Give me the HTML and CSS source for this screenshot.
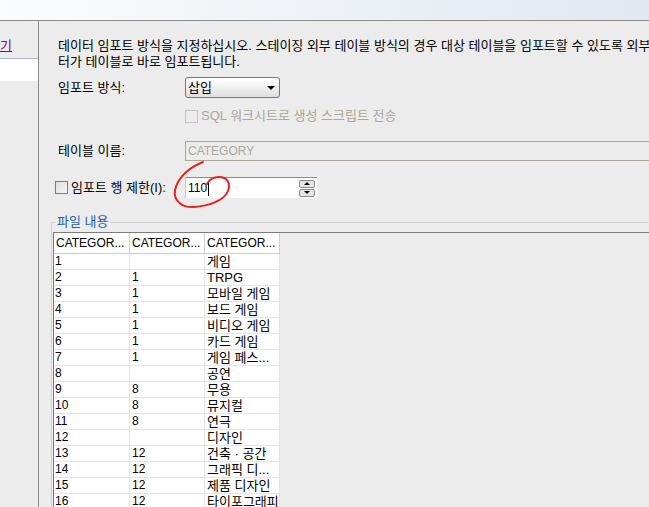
FILE: index.html
```html
<!DOCTYPE html>
<html lang="ko">
<head>
<meta charset="utf-8">
<link rel="stylesheet" href="styles.css">
</head>
<body>
<div class="top"></div>
<div class="main">
  <aside class="side">
    <div class="side-link"><a href="#" class="link">기</a></div>
    <div class="side-field"></div>
  </aside>
  <section class="content">
    <p class="desc">데이터 임포트 방식을 지정하십시오. 스테이징 외부 테이블 방식의 경우 대상 테이블을 임포트할 수 있도록 외부<br>터가 테이블로 바로 임포트됩니다.</p>
    <div class="form">
      <div class="row row-method">
        <span class="label">임포트 방식:</span>
        <div class="select"><span>삽입</span><span class="arrow"></span></div>
      </div>
      <div class="row row-sql">
        <span></span>
        <label class="check disabled"><span class="box"></span>SQL 워크시트로 생성 스크립트 전송</label>
      </div>
      <div class="row row-name">
        <span class="label">테이블 이름:</span>
        <div class="field disabled-field">CATEGORY</div>
      </div>
      <div class="row row-limit">
        <label class="check"><span class="box box-on"></span>임포트 행 제한(I):</label>
        <div class="spin"><span class="spin-text">110<span class="caret"></span></span><span class="spin-btns"><span class="sb sb-up"></span><span class="sb sb-down"></span></span></div>
      </div>
    </div>
    <fieldset class="group">
      <legend>파일 내용</legend>
      <div class="grid">
        <table>
          <colgroup><col class="c1"><col class="c"><col class="c"></colgroup>
          <thead>
            <tr><th>CATEGOR...</th><th>CATEGOR...</th><th>CATEGOR...</th></tr>
          </thead>
          <tbody>
            <tr><td>1</td><td></td><td>게임</td></tr>
            <tr><td>2</td><td>1</td><td>TRPG</td></tr>
            <tr><td>3</td><td>1</td><td>모바일 게임</td></tr>
            <tr><td>4</td><td>1</td><td>보드 게임</td></tr>
            <tr><td>5</td><td>1</td><td>비디오 게임</td></tr>
            <tr><td>6</td><td>1</td><td>카드 게임</td></tr>
            <tr><td>7</td><td>1</td><td>게임 페스...</td></tr>
            <tr><td>8</td><td></td><td>공연</td></tr>
            <tr><td>9</td><td>8</td><td>무용</td></tr>
            <tr><td>10</td><td>8</td><td>뮤지컬</td></tr>
            <tr><td>11</td><td>8</td><td>연극</td></tr>
            <tr><td>12</td><td></td><td>디자인</td></tr>
            <tr><td>13</td><td>12</td><td>건축 · 공간</td></tr>
            <tr><td>14</td><td>12</td><td>그래픽 디...</td></tr>
            <tr><td>15</td><td>12</td><td>제품 디자인</td></tr>
            <tr><td>16</td><td>12</td><td>타이포그래피</td></tr>
          </tbody>
        </table>
      </div>
    </fieldset>
  </section>
</div>
<svg class="mark" width="649" height="507" viewBox="0 0 649 507">
  <path d="M203,162 C190,167 178,177 175,190 C173,201 183,208 194,207 C208,206 224,201 228,191 C231,183 227,177 219,177 C213,177 209,180 207,184" fill="none" stroke="#e3231d" stroke-width="2" stroke-linecap="round"/>
</svg>
</body>
</html>
```
FILE: styles.css
```css
html, body {
  margin: 0;
  padding: 0;
  overflow: hidden;
}
body {
  width: 649px;
  height: 507px;
  background: #ececec;
  color: #000;
  font: 13px/16px "Liberation Sans", "Noto Sans CJK KR", sans-serif;
  position: relative;
}
.top {
  height: 20px;
  background: linear-gradient(90deg, #fbfcfd 0%, #eef2f6 50%, #e1e8ef 100%);
  border-bottom: 1px solid #8a8a8a;
}
.main {
  display: flex;
  height: 486px;
}
.side {
  flex: none;
  width: 38px;
  border-right: 1px solid #8a8a8a;
}
.side-link {
  height: 37px;
  padding-top: 17px;
  box-sizing: border-box;
}
.link {
  color: #800080;
  text-decoration: underline;
}
.side-field {
  height: 22px;
  background: #fff;
  border-top: 1px solid #a5b5cf;
}
.content {
  flex: 1;
  min-width: 0;
  padding: 17px 0 0 12px;
}
.desc {
  margin: 0 0 0 7px;
  white-space: nowrap;
  line-height: 16px;
}
.form {
  margin-left: 7px;
  display: flex;
  flex-direction: column;
}
.row {
  display: grid;
  grid-template-columns: 127px 1fr;
  align-items: center;
}
.row-method { margin-top: 7px; height: 21px; }
.row-sql { margin-top: 10px; height: 15px; }
.row-name { margin-top: 18px; height: 20px; }
.row-limit { margin-top: 16px; height: 21px; margin-left: -3px; grid-template-columns: 130px 1fr; }
.select {
  width: 95px;
  height: 21px;
  box-sizing: border-box;
  border: 1px solid #777;
  border-radius: 3px;
  background: linear-gradient(#ffffff, #f2f2f2 45%, #dedede);
  display: flex;
  align-items: center;
  justify-content: space-between;
  padding: 0 4px 0 2px;
}
.arrow {
  width: 0;
  height: 0;
  border-left: 4px solid transparent;
  border-right: 4px solid transparent;
  border-top: 4px solid #000;
}
.check {
  display: flex;
  align-items: center;
  gap: 3px;
}
.box {
  width: 11px;
  height: 11px;
  border: 1px solid #7c7c7c;
  background: linear-gradient(135deg, #dcdcdc, #f8f8f8);
  flex: none;
}
.disabled { color: #aca899; }
.disabled .box {
  border-color: #c7c5b8;
  background: #ececec;
}
.field {
  width: 520px;
  height: 20px;
  box-sizing: border-box;
  border: 1px solid #aca899;
  padding-left: 2px;
  line-height: 18px;
  font-size: 12px;
}
.disabled-field { color: #aca899; background: #ececec; }
.spin {
  width: 132px;
  height: 21px;
  box-sizing: border-box;
  background: #fff;
  border-top: 1px solid #8c8c8c;
  border-left: 1px solid #c8c8c8;
  display: flex;
  align-items: center;
  padding: 0 2px 0 2px;
  font-size: 12px;
}
.spin-text {
  flex: 1;
  display: flex;
  align-items: center;
}
.caret {
  display: inline-block;
  width: 1px;
  height: 15px;
  background: #000;
  margin-left: 1px;
}
.spin-btns {
  display: flex;
  flex-direction: column;
  gap: 1px;
}
.sb {
  width: 16px;
  height: 8px;
  box-sizing: border-box;
  border: 1px solid #8a8a8a;
  border-radius: 2px;
  background: #e6e6e6;
  display: flex;
  align-items: center;
  justify-content: center;
}
.sb::after {
  content: "";
  width: 0;
  height: 0;
  border-left: 3px solid transparent;
  border-right: 3px solid transparent;
}
.sb-up::after { border-bottom: 3px solid #000; }
.sb-down::after { border-top: 3px solid #000; }
.group {
  margin: 16px 0 0 0;
  padding: 0 0 0 1px;
  width: 700px;
  height: 320px;
  border: 1px solid #d2d2d2;
  border-right: none;
}
.group legend {
  padding: 0 2px;
  margin-left: 2px;
  color: #1f5fa8;
  line-height: 16px;
}
.grid {
  margin-top: 2px;
  border-top: 1px solid #7c7c7c;
  border-left: 1px solid #7c7c7c;
  height: 300px;
  background: #ececec;
}
table {
  border-collapse: separate;
  border-spacing: 0;
  table-layout: fixed;
  width: 226px;
}
col.c1 { width: 76px; }
col.c { width: 75px; }
th, td {
  box-sizing: border-box;
  white-space: nowrap;
  overflow: hidden;
  text-align: left;
  background: #fff;
  font-weight: normal;
  padding: 0;
}
th {
  height: 21px;
  padding-left: 2px;
  font-size: 12px;
  border-right: 1px solid #cfcfcf;
  border-bottom: 1px solid #cfcfcf;
}
td {
  height: 16px;
  line-height: 15px;
  padding-left: 1px;
  border-right: 1px solid #e4e4e4;
  border-bottom: 1px solid #e4e4e4;
}
td:nth-child(1), td:nth-child(2) { font-size: 12px; }
td:nth-child(2), td:nth-child(3) { padding-left: 2px; }
.mark {
  position: absolute;
  left: 0;
  top: 0;
  pointer-events: none;
}
```
